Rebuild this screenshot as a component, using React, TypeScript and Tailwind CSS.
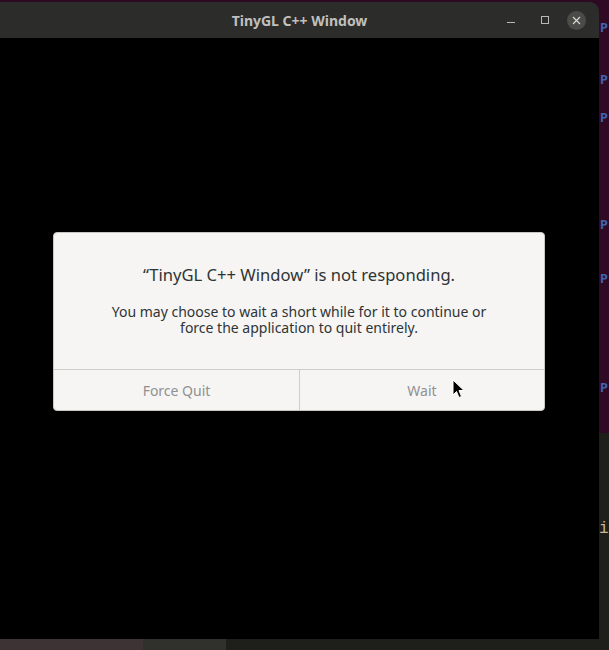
import React from "react";

const stripRows = [28, 80, 118, 225, 279, 388];

const Cursor: React.FC = () => (
  <svg
    className="absolute left-[452px] top-[379px]"
    width="14"
    height="20"
    viewBox="0 0 14 20"
  >
    <path
      d="M1 1 L1 16 L4.5 12.5 L7 18.5 L9.5 17.5 L7 11.5 L12 11.5 Z"
      fill="#000"
      stroke="#fff"
      strokeWidth="1"
      strokeLinejoin="round"
    />
  </svg>
);

const TitleBar: React.FC = () => (
  <div className="relative flex h-[36px] items-center justify-center rounded-tr-[9px] bg-[#2c2c2a]">
    <span className="text-[14px] font-bold text-[#c0c0bd]">TinyGL C++ Window</span>
    <div className="absolute right-[9px] top-0 flex h-full items-center">
      <div className="flex h-[36px] w-[34px] items-center justify-center pt-[4px]">
        <div className="h-px w-[8px] bg-[#b8b8b5]" />
      </div>
      <div className="flex h-[36px] w-[34px] items-center justify-center">
        <div className="h-[8px] w-[8px] border border-[#b8b8b5]" />
      </div>
      <div className="flex h-[36px] w-[28px] items-center justify-center">
        <div className="flex h-[19px] w-[19px] items-center justify-center rounded-full bg-[#4b4b48]">
          <svg width="9" height="9" viewBox="0 0 9 9">
            <path d="M1 1 L8 8 M8 1 L1 8" stroke="#d6d6d3" strokeWidth="1.2" />
          </svg>
        </div>
      </div>
    </div>
  </div>
);

const Dialog: React.FC = () => (
  <div className="flex w-[492px] flex-col overflow-hidden rounded-[4px] border border-[#c9c7c2] bg-[#f6f5f3]">
    <div className="flex h-[136px] flex-col items-center pt-[31px]">
      <div className="text-[16.6px] leading-[22px] text-[#2e3436]">
        “TinyGL C++ Window” is not responding.
      </div>
      <div className="mt-[18px] text-center text-[14px] leading-[16px] text-[#2e3436]">
        You may choose to wait a short while for it to continue or
        <br />
        force the application to quit entirely.
      </div>
    </div>
    <div className="grid h-[41px] grid-cols-2 border-t border-[#cfcdc8]">
      <div className="flex items-center justify-center text-[14px] text-[#8f9192]">Force Quit</div>
      <div className="flex items-center justify-center border-l border-[#cfcdc8] text-[14px] text-[#8f9192]">
        Wait
      </div>
    </div>
  </div>
);

const App: React.FC = () => {
  return (
    <div
      className="relative grid h-[650px] w-[609px] grid-cols-[599px_10px] overflow-hidden bg-[#2c0a22]"
      style={{ fontFamily: "'Noto Sans', 'Open Sans', sans-serif" }}
    >
      <div className="flex flex-col">
        <div className="h-[2px] bg-[#2c0a22]" />
        <TitleBar />
        <div className="flex h-[601px] items-start bg-black pl-[53px] pt-[194px]">
          <Dialog />
        </div>
        <div className="flex h-[11px]">
          <div className="w-[143px] bg-[#3d3334]" />
          <div className="w-[83px] bg-[#30302c]" />
          <div className="flex-1 bg-[#1e1e1a]" />
        </div>
      </div>

      <div className="flex flex-col overflow-hidden">
        <div className="relative h-[433px] bg-[#300a24]">
          {stripRows.map((y) => (
            <div
              key={y}
              className="absolute left-[1px] text-[13px] font-bold leading-none text-[#3f63b0]"
              style={{ top: y - 7, fontFamily: "'DejaVu Sans Mono', monospace" }}
            >
              Pr
            </div>
          ))}
        </div>
        <div className="relative flex-1 bg-[#1e1e1a]">
          <div
            className="absolute left-[0px] top-[88px] text-[16px] leading-none text-[#c9b98f]"
            style={{ fontFamily: "'Liberation Mono', monospace" }}
          >
            i-
          </div>
        </div>
      </div>

      <Cursor />
    </div>
  );
};

export default App;
